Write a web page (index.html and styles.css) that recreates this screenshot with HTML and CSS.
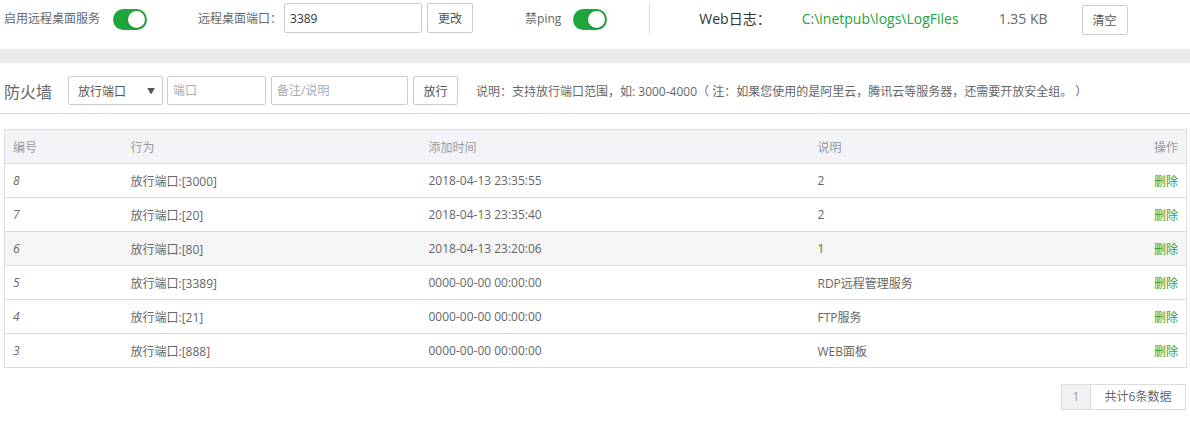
FILE: index.html
```html
<!DOCTYPE html>
<html lang="zh-CN">
<head>
    <meta charset="UTF-8">
    <title>防火墙</title>
    <link rel="stylesheet" href="styles.css">
</head>
<body>
    <div class="topbar">
        <span class="lbl">启用远程桌面服务</span>
        <span class="toggle on ml-13"><i></i></span>
        <span class="lbl ml-51">远程桌面端口：</span>
        <input class="ipt port-ipt" type="text" value="3389">
        <button class="btn ml-5">更改</button>
        <span class="lbl ml-52">禁ping</span>
        <span class="toggle on ml-12"><i></i></span>
        <span class="divider"></span>
        <span class="weblog-title">Web日志：</span>
        <span class="weblog-path">C:\inetpub\logs\LogFiles</span>
        <span class="weblog-size">1.35 KB</span>
        <button class="btn btn-clear">清空</button>
    </div>

    <div class="band"></div>

    <div class="fw-bar">
        <span class="fw-title">防火墙</span>
        <div class="select"><span>放行端口</span><span class="arrow">▼</span></div>
        <input class="ipt fw-port" type="text" placeholder="端口">
        <input class="ipt fw-note" type="text" placeholder="备注/说明">
        <button class="btn fw-btn">放行</button>
        <span class="fw-tip">说明：支持放行端口范围，如: 3000-4000（ 注：如果您使用的是阿里云，腾讯云等服务器，还需要开放安全组。 ）</span>
    </div>

    <table class="list">
        <colgroup>
            <col style="width:118px">
            <col style="width:298px">
            <col style="width:389px">
            <col>
            <col style="width:120px">
        </colgroup>
        <thead>
            <tr><th>编号</th><th>行为</th><th>添加时间</th><th>说明</th><th class="r">操作</th></tr>
        </thead>
        <tbody>
            <tr><td class="num">8</td><td>放行端口:[3000]</td><td>2018-04-13 23:35:55</td><td>2</td><td class="r"><a>删除</a></td></tr>
            <tr><td class="num">7</td><td>放行端口:[20]</td><td>2018-04-13 23:35:40</td><td>2</td><td class="r"><a>删除</a></td></tr>
            <tr class="hover"><td class="num">6</td><td>放行端口:[80]</td><td>2018-04-13 23:20:06</td><td>1</td><td class="r"><a>删除</a></td></tr>
            <tr><td class="num">5</td><td>放行端口:[3389]</td><td>0000-00-00 00:00:00</td><td>RDP远程管理服务</td><td class="r"><a>删除</a></td></tr>
            <tr><td class="num">4</td><td>放行端口:[21]</td><td>0000-00-00 00:00:00</td><td>FTP服务</td><td class="r"><a>删除</a></td></tr>
            <tr><td class="num">3</td><td>放行端口:[888]</td><td>0000-00-00 00:00:00</td><td>WEB面板</td><td class="r"><a>删除</a></td></tr>
        </tbody>
    </table>

    <div class="page">
        <span class="cur">1</span>
        <span class="total">共计6条数据</span>
    </div>
</body>
</html>
```

FILE: styles.css
```css
body {
    margin: 0;
    font-family: "Open Sans", "Noto Sans CJK SC", sans-serif;
    font-size: 12px;
    color: #666;
    background: #fff;
}
.topbar {
    display: flex;
    align-items: center;
    height: 36px;
    padding: 0 0 13px 4px;
}
.lbl {
    font-size: 12px;
    color: #666;
}
.ml-5 { margin-left: 5px; }
.ml-12 { margin-left: 12px; }
.ml-13 { margin-left: 13px; }
.ml-51 { margin-left: 51px; }
.ml-52 { margin-left: 52px; }
.toggle {
    display: inline-block;
    width: 34px;
    height: 21px;
    border-radius: 11px;
    background: #ccc;
    position: relative;
    margin-top: 2px;
}
.toggle.on {
    background: #20a53a;
}
.toggle i {
    position: absolute;
    top: 2px;
    left: 2px;
    width: 17px;
    height: 17px;
    border-radius: 50%;
    background: #fff;
    box-shadow: 0 1px 2px rgba(0,0,0,0.2);
}
.toggle.on i {
    left: 15px;
}
.ipt {
    box-sizing: border-box;
    height: 30px;
    border: 1px solid #ccc;
    border-radius: 2px;
    padding: 0 5px;
    font-family: inherit;
    font-size: 12px;
    color: #333;
    outline: none;
}
.ipt::placeholder {
    color: #aaa;
}
.port-ipt {
    width: 138px;
    margin-left: 2px;
}
.btn {
    box-sizing: border-box;
    height: 30px;
    padding: 0 10px;
    border: 1px solid #ccc;
    border-radius: 2px;
    background: #fff;
    font-family: inherit;
    font-size: 12px;
    color: #555;
}
.divider {
    width: 1px;
    height: 32px;
    background: #ddd;
    margin-left: 42px;
}
.weblog-title {
    font-size: 14px;
    color: #333;
    margin-left: 49px;
}
.weblog-path {
    font-size: 14px;
    color: #20a53a;
    margin-left: 31px;
}
.weblog-size {
    font-size: 14px;
    color: #666;
    margin-left: 40px;
}
.btn-clear {
    margin-left: 34px;
    margin-top: 4px;
    width: 46px;
    padding: 0;
}
.band {
    height: 14px;
    background: #e9ecef;
}
.fw-bar {
    display: flex;
    align-items: center;
    height: 29px;
    padding: 13px 0 8px 4px;
    border-bottom: 1px solid #ddd;
}
.fw-title {
    font-size: 16px;
    color: #666;
    margin-right: 16px;
}
.select {
    box-sizing: border-box;
    width: 95px;
    height: 29px;
    border: 1px solid #ccc;
    border-radius: 2px;
    display: flex;
    align-items: center;
    justify-content: space-between;
    padding: 0 7px 0 9px;
    color: #555;
}
.select .arrow {
    font-size: 8px;
    color: #555;
}
.fw-port {
    width: 99px;
    height: 29px;
    margin-left: 4px;
}
.fw-note {
    width: 137px;
    height: 29px;
    margin-left: 5px;
}
.fw-btn {
    height: 29px;
    width: 45px;
    padding: 0;
    margin-left: 5px;
}
.fw-tip {
    margin-left: 18px;
    color: #666;
}
.list {
    width: 1183px;
    margin: 15px 0 0 4px;
    border-collapse: collapse;
    table-layout: fixed;
    border: 1px solid #ddd;
}
.list th,
.list td {
    height: 33px;
    padding: 0 8px;
    text-align: left;
    font-weight: normal;
    border-top: 1px solid #ddd;
    white-space: nowrap;
}
.list th {
    background: #f3f4f8;
    color: #999;
}
.list td {
    color: #666;
}
.list .r {
    text-align: right;
}
.list td.num {
    font-style: italic;
}
.list tr.hover td {
    background: #f5f5f5;
}
.list a {
    color: #20a53a;
}
.page {
    display: flex;
    justify-content: flex-end;
    margin: 16px 4px 0 0;
}
.page span {
    box-sizing: border-box;
    height: 26px;
    line-height: 24px;
    border: 1px solid #ddd;
    text-align: center;
    color: #666;
}
.page .cur {
    width: 30px;
    background: #f2f2f2;
    color: #999;
}
.page .total {
    width: 95px;
    border-left: none;
}
```
